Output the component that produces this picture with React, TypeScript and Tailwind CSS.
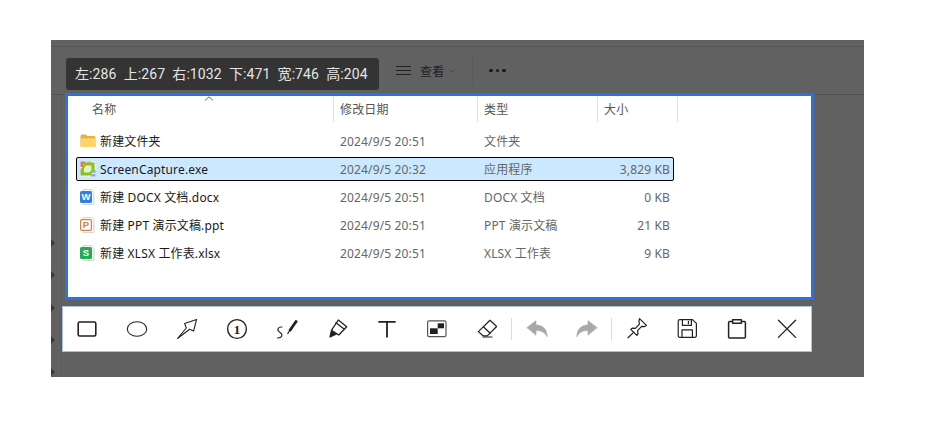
import { Scissors, Clipboard, Type, Share2, Trash2, ArrowUpDown } from "lucide-react";

const ink = "#222";

function FolderIcon() {
  return (
    <svg width="16" height="16" viewBox="0 0 16 16">
      <path d="M0.5 3a1.5 1.5 0 0 1 1.5-1.5h3.6l1.8 1.6H14a1.5 1.5 0 0 1 1.5 1.5V12.5a1.5 1.5 0 0 1-1.5 1.5H2A1.5 1.5 0 0 1 .5 12.5z" fill="#e8b23a" />
      <path d="M0.5 5.3h15V12.5a1.5 1.5 0 0 1-1.5 1.5H2A1.5 1.5 0 0 1 .5 12.5z" fill="#fbd46c" />
    </svg>
  );
}

function ExeIcon() {
  return (
    <svg width="16" height="16" viewBox="0 0 16 16">
      <rect x="0.5" y="0.5" width="15" height="15" fill="#f4f4f4" />
      <path d="M.5 .5h5v2.5H3v3H.5z" fill="#d9796e" />
      <path d="M.5 7h2.5v3.5H.5zM7 .5h4v2H7z" fill="#e9b0a9" />
      <path d="M13 9h2.5v3H13zM10.5 13h5v2.5h-5z" fill="#7fb0ea" />
      <path d="M4.5 1.5H14.5V9L10 14.5H.5V10Z" fill="#8cc21a" />
      <path d="M6 4.5H11.5V9.5L9 11.5H4V7Z" fill="#e6f1c8" />
    </svg>
  );
}

function DocIcon({ fill, letter, outline }: { fill: string; letter: string; outline?: boolean }) {
  return (
    <svg width="16" height="16" viewBox="0 0 16 16">
      <path d="M3 .5h8.5l2.5 2.5v12.5H3z" fill="#f6f6f6" stroke="#d6d6d6" />
      <rect
        x={outline ? 0.6 : 0}
        y={outline ? 2.6 : 2}
        width={outline ? 10.8 : 12}
        height={outline ? 10.8 : 12}
        rx="1.5"
        fill={outline ? "#fff" : fill}
        stroke={outline ? fill : "none"}
        strokeWidth="1.2"
      />
      <text
        x="6"
        y="11.4"
        textAnchor="middle"
        fontSize="9.5"
        fontWeight="700"
        fontFamily="Liberation Sans, sans-serif"
        fill={outline ? fill : "#fff"}
      >
        {letter}
      </text>
    </svg>
  );
}

const files = [
  { name: "新建文件夹", date: "2024/9/5 20:51", type: "文件夹", size: "", icon: <FolderIcon /> },
  { name: "ScreenCapture.exe", date: "2024/9/5 20:32", type: "应用程序", size: "3,829 KB", icon: <ExeIcon />, selected: true },
  { name: "新建 DOCX 文档.docx", date: "2024/9/5 20:51", type: "DOCX 文档", size: "0 KB", icon: <DocIcon fill="#2f7fe8" letter="W" /> },
  { name: "新建 PPT 演示文稿.ppt", date: "2024/9/5 20:51", type: "PPT 演示文稿", size: "21 KB", icon: <DocIcon fill="#d5813f" letter="P" outline /> },
  { name: "新建 XLSX 工作表.xlsx", date: "2024/9/5 20:51", type: "XLSX 工作表", size: "9 KB", icon: <DocIcon fill="#1fae55" letter="S" /> },
];

function Ico({ children }: { children: React.ReactNode }) {
  return (
    <div className="flex h-full w-[50px] shrink-0 items-center justify-center">
      <svg width="24" height="24" viewBox="0 0 24 24" fill="none" stroke={ink} strokeLinecap="round" strokeLinejoin="round">
        {children}
      </svg>
    </div>
  );
}

function Sep() {
  return <div className="-ml-px h-[22px] w-px shrink-0 bg-[#dcdcdc]" />;
}

function Toolbar() {
  return (
    <div className="ml-[11px] h-[46px] w-[750px] border border-[#a9c2e6] bg-white">
      <div className="-ml-px flex h-full items-center">
        <Ico><rect x="3.2" y="5" width="17.6" height="14" rx="1.5" strokeWidth="1.6" /></Ico>
        <Ico><ellipse cx="12" cy="12" rx="9.7" ry="7.2" strokeWidth="1.1" /></Ico>
        <Ico><path d="M2.5 21.5 L11.3 11 L9.6 6.6 L21.6 2.4 L18.6 14 L14.6 12.2 Z" strokeWidth="1.1" /></Ico>
        <Ico>
          <circle cx="12" cy="12" r="9.4" strokeWidth="1.4" />
          <text x="12" y="16.6" textAnchor="middle" fontSize="13" fontWeight="700" fontFamily="Liberation Serif, serif" fill={ink} stroke="none">1</text>
        </Ico>
        <Ico>
          <path d="M21.8 3.5 L14.5 14" strokeWidth="2.8" strokeLinecap="butt" />
          <path d="M14.5 14 L12.8 16.4" strokeWidth="1.2" />
          <path d="M7 10 C3 9.5 1.5 13 4.5 15 C8 17 8 20.5 2.5 21" strokeWidth="1.1" />
        </Ico>
        <Ico>
          <path d="M13.3 3 L21.7 9.7 L13.8 18 L6.4 13.4 Z" strokeWidth="1.3" />
          <path d="M11 5.7 L19 12" strokeWidth="1.3" />
          <path d="M6.4 14 L11 17.2 L5 20 Z" fill={ink} strokeWidth="1.3" />
        </Ico>
        <Ico><path d="M4 4.8 H20 M12 4.8 V19.8" strokeWidth="1.8" /></Ico>
        <Ico>
          <rect x="2.6" y="3.8" width="18.4" height="15.8" rx="1.6" strokeWidth="1.2" stroke="#555" />
          <rect x="12.7" y="6.3" width="6.3" height="5" fill={ink} stroke="none" />
          <rect x="5" y="11.3" width="7.7" height="5.7" fill={ink} stroke="none" />
        </Ico>
        <Ico>
          <path d="M15 3.3 L21.6 9.5 L12.3 18.8 H8 L3.4 14.6 Z" strokeWidth="1.2" />
          <path d="M8.4 9.8 L15 16" strokeWidth="1.2" />
          <path d="M8 20 H17" strokeWidth="1.2" />
        </Ico>
        <Sep />
        <Ico><path d="M2 10.5 L11 3.7 V8 C17.5 8 22 12 22.2 19.7 C20 15.5 16.5 13.6 11 13.6 V18 Z" fill="#a8a8a8" stroke="#a8a8a8" strokeWidth=".6" /></Ico>
        <Ico><path d="M22 10.5 L13 3.7 V8 C6.5 8 2 12 1.8 19.7 C4 15.5 7.5 13.6 13 13.6 V18 Z" fill="#a8a8a8" stroke="#a8a8a8" strokeWidth=".6" /></Ico>
        <Sep />
        <Ico>
          <path d="M14.5 1.6 L21.4 8.4 L19.6 9.6 L16.6 9.4 L12.6 13.6 L13 17 L11.8 18.4 L5.8 12.4 L7.2 11.2 L10.4 11.4 L14.4 7.2 L14 4 Z" strokeWidth="1.2" />
          <path d="M8.6 15.4 L3 20.8" strokeWidth="1.2" />
        </Ico>
        <Ico>
          <path d="M5 2.6 H17.5 L21.4 6.4 V18.6 A1.8 1.8 0 0 1 19.6 20.4 H5 A1.8 1.8 0 0 1 3.2 18.6 V4.4 A1.8 1.8 0 0 1 5 2.6 Z" strokeWidth="1.2" />
          <path d="M7.4 2.8 V8.4 H16.4 V2.8 M13.4 4.4 V6.6" strokeWidth="1.2" />
          <path d="M7 20.2 V12.8 H17.4 V20.2" strokeWidth="1.2" />
        </Ico>
        <Ico>
          <path d="M7.6 4.6 H4.6 A1 1 0 0 0 3.6 5.6 V20 A1 1 0 0 0 4.6 21 H19.4 A1 1 0 0 0 20.4 20 V5.6 A1 1 0 0 0 19.4 4.6 H16.4" strokeWidth="1.5" />
          <rect x="7.6" y="2.8" width="8.8" height="3.4" strokeWidth="1.4" />
        </Ico>
        <Ico><path d="M3.4 3.2 L20.6 20.4 M20.6 3.2 L3.4 20.4" strokeWidth="1.3" /></Ico>
      </div>
    </div>
  );
}

export default function App() {
  return (
    <div className="h-[440px] w-[939px] bg-white pl-[51px] pt-[40px] font-['Noto_Sans','Noto_Sans_CJK_SC',sans-serif] text-[12px] tracking-[0.15px]">
      <div className="relative flex h-[337px] w-[813px] flex-col bg-[#616161]">
        <div className="h-[7px] shrink-0 border-b border-[#555]" />
        <div className="flex h-[48px] shrink-0 items-center border-b border-[#525252] text-[#222]">
          {/* command bar under the size tip */}
          <Scissors className="ml-[19px] shrink-0" size={14} strokeWidth={1} color="#1c1c1c" />
          <Clipboard className="ml-[28px] shrink-0" size={14} strokeWidth={1} color="#1c1c1c" />
          <Type className="ml-[37px] shrink-0" size={14} strokeWidth={1} color="#1c1c1c" />
          <Share2 className="ml-[35px] shrink-0" size={14} strokeWidth={1} color="#1c1c1c" />
          <Trash2 className="ml-[29px] shrink-0" size={14} strokeWidth={1} color="#1c1c1c" />
          <div className="ml-[21px] h-[24px] w-px shrink-0 bg-[#1c1c1c]" />
          <ArrowUpDown className="ml-[17px] shrink-0" size={14} strokeWidth={1} color="#1c1c1c" />
          <div className="ml-[74px] flex w-[15px] flex-col gap-[3px]">
            <div className="h-px bg-[#222]" />
            <div className="h-px bg-[#222]" />
            <div className="h-px bg-[#222]" />
          </div>
          <span className="ml-[9px] pt-[2px]">查看</span>
          <svg className="ml-[5px]" width="6" height="4" viewBox="0 0 6 4" fill="none" stroke="#4a4a4a">
            <path d="M.5 .5 L3 3 L5.5 .5" />
          </svg>
          <div className="ml-[17px] h-[30px] w-px bg-[#5a5a5a]" />
          <div className="ml-[16px] flex gap-[3px]">
            <div className="size-[3.5px] rounded-full bg-[#1a1a1a]" />
            <div className="size-[3.5px] rounded-full bg-[#1a1a1a]" />
            <div className="size-[3.5px] rounded-full bg-[#1a1a1a]" />
          </div>
        </div>

        <div className="absolute left-[15px] top-[18px] flex h-[32px] w-[313px] items-center rounded-[3px] bg-[#303030]/90 pl-[9px] text-[14px] tracking-[0.1px] whitespace-pre text-[#e4e4e4] font-['Roboto','Noto_Sans_CJK_SC',sans-serif]">
          左:286  上:267  右:1032  下:471  宽:746  高:204
        </div>

        <div className="absolute bottom-0 left-[10px] top-[56px] w-px bg-[#5c5c5c]" />
        <div className="absolute left-0 top-[199px] flex flex-col gap-[24.25px]">
          {[0, 1, 2, 3, 4].map((i) => (
            <svg key={i} width="4" height="8" viewBox="0 0 4 8">
              <path d="M0 0 L4 4 L0 8 Z" fill="#3a3a3a" />
            </svg>
          ))}
        </div>

        <div className="relative -mt-[2px] ml-[14px] flex h-[207px] w-[749px] shrink-0 flex-col border-[3px] border-[#2672e6] bg-white">
          <div className="flex h-[26px] shrink-0 text-[#555]">
            <div className="flex w-[266px] items-center border-r border-[#e2e2e2] pl-[24px] pt-[2px]">名称</div>
            <div className="flex w-[144px] items-center border-r border-[#e2e2e2] pl-[6px] pt-[2px]">修改日期</div>
            <div className="flex w-[120px] items-center border-r border-[#e2e2e2] pl-[6px] pt-[2px]">类型</div>
            <div className="flex w-[80px] items-center border-r border-[#e2e2e2] pl-[6px] pt-[2px]">大小</div>
          </div>
          <svg className="absolute left-[136px] top-0" width="10" height="5" viewBox="0 0 10 5" fill="none" stroke="#666">
            <path d="M1 4.5 L5 .8 L9 4.5" />
          </svg>
          <div className="mt-[5px] flex flex-col">
            {files.map((f) => (
              <div key={f.name} className="flex h-[28px] items-center pl-[8px]">
                <div
                  className={
                    f.selected
                      ? "grid h-[24px] w-[598px] grid-cols-[263px_144px_114px_72px] items-center rounded-[2px] border border-black bg-[#cce8ff]"
                      : "grid h-[24px] w-[598px] grid-cols-[263px_144px_114px_72px] items-center border border-transparent"
                  }
                >
                  <div className="flex items-center gap-[4px] pl-[3px] text-[#1a1a1a]">
                    {f.icon}
                    <span className="pt-[2px]">{f.name}</span>
                  </div>
                  <span className="pt-[2px] text-[#666]">{f.date}</span>
                  <span className="pt-[2px] text-[#666]">{f.type}</span>
                  <span className="pt-[2px] text-right text-[#666]">{f.size}</span>
                </div>
              </div>
            ))}
          </div>
        </div>

        <div className="mt-[6px]">
          <Toolbar />
        </div>
      </div>
    </div>
  );
}
